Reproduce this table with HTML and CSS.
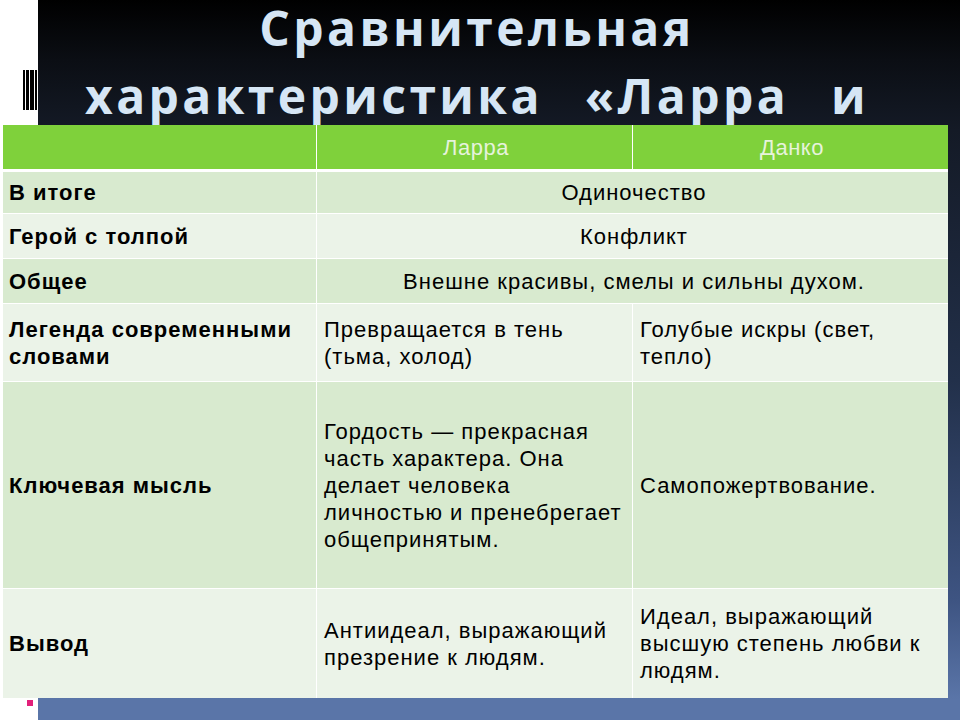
FILE: index.html
```html
<!DOCTYPE html>
<html lang="ru">
<head>
<meta charset="utf-8">
<title>Сравнительная характеристика «Ларра и Данко»</title>
<link rel="stylesheet" href="styles.css">
</head>
<body>
<div class="slide">
  <header class="title-box">
    <h1 class="title">Сравнительная<br>характеристика «Ларра и</h1>
  </header>
  <div class="table">
    <div class="cell head"></div>
    <div class="cell head">Ларра</div>
    <div class="cell head">Данко</div>

    <div class="cell key odd">В итоге</div>
    <div class="cell odd span">Одиночество</div>

    <div class="cell key even">Герой с толпой</div>
    <div class="cell even span">Конфликт</div>

    <div class="cell key odd">Общее</div>
    <div class="cell odd span">Внешне красивы, смелы и сильны духом.</div>

    <div class="cell key even">Легенда современными<br>словами</div>
    <div class="cell even">Превращается в тень<br>(тьма, холод)</div>
    <div class="cell even">Голубые искры (свет,<br>тепло)</div>

    <div class="cell key odd">Ключевая мысль</div>
    <div class="cell odd">Гордость — прекрасная<br>часть характера. Она<br>делает человека<br>личностью и пренебрегает<br>общепринятым.</div>
    <div class="cell odd">Самопожертвование.</div>

    <div class="cell key even">Вывод</div>
    <div class="cell even">Антиидеал, выражающий<br>презрение к людям.</div>
    <div class="cell even">Идеал, выражающий<br>высшую степень любви к<br>людям.</div>
  </div>
</div>
</body>
</html>
```

FILE: styles.css
```css
html, body {
  margin: 0;
  padding: 0;
  background: #ffffff;
}

.slide {
  width: 960px;
  height: 720px;
  overflow: hidden;
  font-family: "Liberation Sans", Arial, sans-serif;
  background:
    linear-gradient(#e2207a, #e2207a) 27px 700px / 6px 6px no-repeat,
    linear-gradient(90deg, #000 0 2px, #fff 2px 3.5px, #000 3.5px 6px, #fff 6px 7.5px, #000 7.5px 11.5px, #fff 11.5px 12.5px, #000 12.5px 14px) 23px 70px / 14px 40px no-repeat,
    linear-gradient(#ffffff, #ffffff) 0 0 / 38px 100% no-repeat,
    linear-gradient(#5a75a8, #5a75a8) 0 699px / 100% 21px no-repeat,
    linear-gradient(180deg, #000000 0px, #0b0e14 60px, #141a26 130px, #22304a 380px, #3e5482 600px, #5a75a8 699px);
}

.title-box {
  height: 125px;
  overflow: hidden;
  padding: 0 44px 0 38px;
  box-sizing: border-box;
}

.title {
  margin: -6px 0 0;
  font-family: "Open Sans", "Liberation Sans", sans-serif;
  font-weight: 700;
  font-size: 48px;
  line-height: 68px;
  letter-spacing: 3.4px;
  word-spacing: 26px;
  color: #d6e6f5;
  text-align: center;
}

.table {
  display: grid;
  grid-template-columns: 313px 315px 315px;
  grid-template-rows: 46px 41px 44px 44px 77px 206px 109px;
  gap: 1px;
  width: 945px;
  margin-left: 3px;
  background: #ffffff;
}

.cell {
  display: flex;
  align-items: center;
  padding: 0 4px 0 7px;
  font-size: 22px;
  line-height: 27px;
  letter-spacing: 1px;
  color: #000000;
}

.head {
  background: #7fd13b;
  color: #e6f3dc;
  justify-content: center;
  border-bottom: 2px solid #ffffff;
  letter-spacing: 0.5px;
}

.key {
  font-weight: 700;
  padding-left: 6px;
}

.odd {
  background: #d8eacf;
}

.even {
  background: #ebf3e8;
}

.span {
  grid-column: span 2;
  justify-content: center;
}
```
